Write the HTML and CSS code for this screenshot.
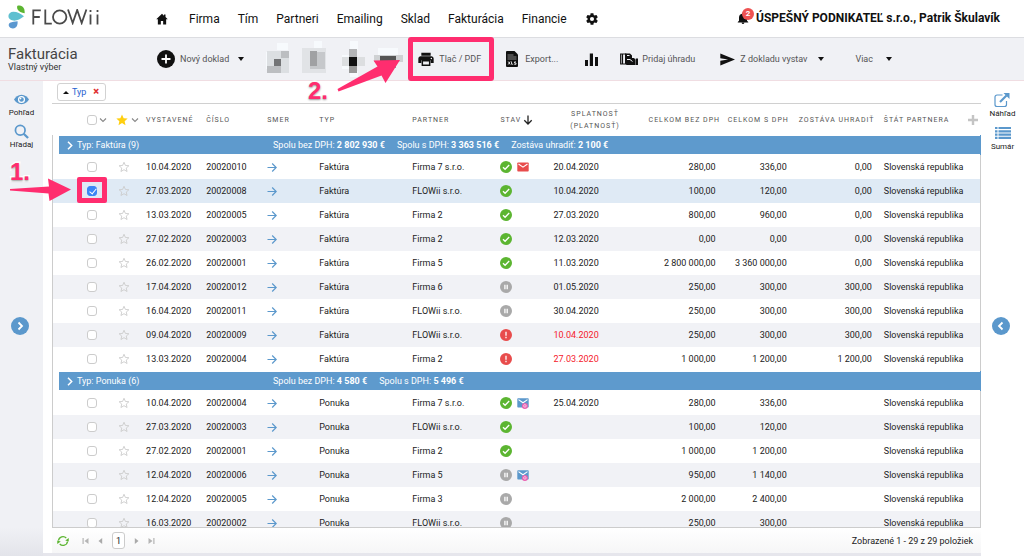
FILE: index.html
```html
<!DOCTYPE html>
<html lang="sk">
<head>
<meta charset="utf-8">
<title>FLOWii – Fakturácia</title>
<link rel="stylesheet" href="styles.css">
</head>
<body>
<svg class="sprite" aria-hidden="true">
  <symbol id="star" viewBox="0 0 24 24"><path d="M12 2.500l2.800 6.400 7 .6-5.300 4.600 1.600 6.900L12 17.400l-6.100 3.600 1.600-6.900L2.200 9.500l7-.6z" fill="none" stroke="#ccc" stroke-width="1.800"/></symbol>
  <symbol id="go" viewBox="0 0 10 10"><path d="M.5 5.500h8.500M5.200 1.500l4 4-4 4" fill="none" stroke="#5b98cc" stroke-width="1.200"/></symbol>
  <symbol id="ok" viewBox="0 0 12 12"><circle cx="6" cy="6" r="6" fill="#5cb531"/><path d="M3 6.200l2.100 2.100L9.200 4" fill="none" stroke="#fff" stroke-width="1.300"/></symbol>
  <symbol id="wait" viewBox="0 0 12 12"><circle cx="6" cy="6" r="6" fill="#a9a9a9"/><path d="M4.900 3.800v4.400M7.200 3.800v4.400" stroke="#fff" stroke-width="1.300"/></symbol>
  <symbol id="late" viewBox="0 0 12 12"><circle cx="6" cy="6" r="6" fill="#e84c4c"/><path d="M6 2.800v3.900M6 7.800v1.400" stroke="#fff" stroke-width="1.300"/></symbol>
  <symbol id="mail" viewBox="0 0 12 12"><rect x=".3" y="1.500" width="11.400" height="9" rx=".8" fill="#e84c4c"/><path d="M1.500 3L6 6.200 10.500 3" fill="none" stroke="#fff" stroke-width="1.100"/></symbol>
  <symbol id="read" viewBox="0 0 12 12"><rect x=".3" y="1.200" width="11.400" height="9.300" rx=".8" fill="#5b98cc"/><path d="M1.500 2.600L6 5.800l4.500-3.200" fill="none" stroke="#fff" stroke-width="1.100"/><circle cx="7.900" cy="8.900" r="3" fill="#ea5fb0"/><circle cx="7.900" cy="8.900" r="1.300" fill="none" stroke="#fff" stroke-width=".6"/></symbol>
  <symbol id="chev" viewBox="0 0 8 6"><path d="M1 1.500l3 3 3-3" fill="none" stroke="#888" stroke-width="1.100"/></symbol>
</svg>

<header class="topbar">
  <a class="logo" href="#" aria-label="FLOWii">
    <svg class="logo-mark" viewBox="0 0 18 24"><path d="M9.500 .8c2.500-1 6 .3 6.800 3.500.3 1.300.4 2.600.4 3.900-3-.3-6.200-1.600-7.200-4-.5-1.200-.6-2.700 0-3.400z" fill="#5cb531"/><path d="M16 11.300C12.500 14.300 8.500 16 5.200 15.600 2.300 15.300.3 13.400.4 11c.1-2.500 2.300-4.200 5-4.200 3.800 0 7.300 2.100 10.600 4.500z" fill="#5fc0d0"/><path d="M9.600 16.200c.2 2.600-.3 5-2 6.300-1.900 1.400-4.900 1.100-6.300-.7-1-1.300-.7-3.200.7-4 2-1.100 5-1 7.600-1.600z" fill="#5b98d0"/></svg>
    <svg class="logo-type" viewBox="0 0 68 16" fill="none" stroke="#4a4a4a" stroke-width="1.800"><path d="M1.300 15.500V1.300h7.500M1.300 8h6.500M13.300 .5v14.200h6.500"/><circle cx="27.700" cy="8" r="6.700"/><path d="M36 .5l4.700 13.500L45.200 1l4.500 13L54.400 .5M58.500 5.500v10M65.500 5.500v10M58.500 1v2M65.500 1v2"/></svg>
  </a>
  <nav class="mainnav">
    <a href="#" aria-label="Domov"><svg class="i12" viewBox="0 0 24 24"><path d="M12 1.500L.5 12.500h3.200V23h6v-7h4.600v7h6V12.500h3.200L19 8V3h-3v2.300z" fill="#111"/></svg></a>
    <a href="#">Firma</a><a href="#">Tím</a><a href="#">Partneri</a><a href="#">Emailing</a><a href="#">Sklad</a><a href="#">Fakturácia</a><a href="#">Financie</a>
    <a href="#" aria-label="Nastavenia"><svg class="i14" viewBox="0 0 24 24"><path fill="#111" d="M19.430 12.980c.04-.32.070-.64.070-.98s-.03-.66-.07-.98l2.110-1.650c.19-.15.240-.42.120-.64l-2-3.460c-.12-.22-.39-.3-.61-.22l-2.490 1c-.52-.4-1.080-.73-1.690-.98l-.38-2.650C14.460 2.180 14.250 2 14 2h-4c-.25 0-.46.180-.49.420l-.38 2.650c-.61.250-1.170.590-1.690.980l-2.490-1c-.23-.09-.49 0-.61.220l-2 3.460c-.13.220-.07.490.12.640l2.110 1.650c-.04.320-.07.650-.07.980s.03.660.070.980l-2.110 1.650c-.19.150-.24.420-.12.640l2 3.460c.12.220.390.300.610.220l2.490-1c.52.400 1.080.730 1.690.980l.38 2.650c.03.240.240.420.490.420h4c.25 0 .46-.18.490-.42l.38-2.650c.61-.25 1.170-.59 1.690-.98l2.490 1c.23.090.490 0 .61-.22l2-3.460c.12-.22.070-.49-.12-.64zM12 15.500a3.500 3.500 0 1 1 0-7 3.500 3.500 0 0 1 0 7z"/></svg></a>
  </nav>
  <div class="account">
    <button class="bell" aria-label="Upozornenia"><svg class="i12" viewBox="0 0 24 24"><path d="M12 24a2.700 2.700 0 0 0 2.700-2.500H9.300A2.700 2.700 0 0 0 12 24zm8-6.500V11c0-4-2-6.800-6-7.600V1.500h-4v1.900C6 4.200 4 7 4 11v6.500L1.500 20v1h21v-1z" fill="#111"/></svg><span class="badge">2</span></button>
    <strong>ÚSPEŠNÝ PODNIKATEĽ s.r.o., Patrik Škulavík</strong>
  </div>
</header>

<section class="toolbar">
  <div class="heading"><h1>Fakturácia</h1><p>Vlastný výber</p></div>
  <button class="tool"><svg class="i18" viewBox="0 0 18 18"><circle cx="9" cy="9" r="9" fill="#111"/><path d="M9 4.500v9M4.500 9h9" stroke="#fff" stroke-width="1.800"/></svg>Nový doklad<i class="caret"></i></button>
  <svg class="mosaic" viewBox="0 0 140 38" shape-rendering="crispEdges">
    <path fill="#f7fafd" d="M11 3h11v7H11zM48 1h8v7h-8zM84 1h8v9h-8zM0 12h7v17H0zM76 15h8v14h-8zM84 31h8v6h-8zM112 8h20v7h-20z"/>
    <path fill="#dcdfe2" d="M1 11h22v22H1z"/><path fill="#bcbec1" d="M15 11h8v7h-8zM1 26h14v7H1z"/><path fill="#737476" d="M8 19h7v7H8z"/>
    <path fill="#e1e3e6" d="M36 8h24v25H36z"/><path fill="#c6c8cb" d="M44 12h15v17H44z"/><path fill="#a0a1a3" d="M44 11h7v15h-7z"/>
    <path fill="#dcdee0" d="M76 17h23v9H76z"/><path fill="#b4b5b7" d="M83 9h8v8h-8z"/><path fill="#111" d="M83 17h8v9h-8z"/><path fill="#999" d="M83 26h8v7h-8z"/>
    <path fill="#cfd1d3" d="M108 15h29v7h-29z"/><path fill="#555" d="M114 16h16v6h-16z"/><path fill="#999" d="M122 22h8v6h-8z"/>
  </svg>
  <button class="tool print"><svg class="i16" viewBox="0 0 24 24"><path d="M5 2.500h14V7H5zM4 8h16c2 0 3.500 1.500 3.500 3.500V18H19v-4H5v4H.5v-6.500C.5 9.500 2 8 4 8z" fill="#111"/><path d="M6.500 14.500h11v7h-11z" fill="none" stroke="#111" stroke-width="2.200"/><circle cx="20" cy="11.300" r="1.100" fill="#fff"/></svg>Tlač / PDF</button>
  <button class="tool export"><svg class="xls" viewBox="0 0 12 16"><path d="M1 0h7.500L12 3.500V15a1 1 0 0 1-1 1H1a1 1 0 0 1-1-1V1a1 1 0 0 1 1-1z" fill="#111"/><path d="M1.500 4h6M1.500 6h9M1.500 8h9" stroke="#bbb" stroke-width=".7"/><path d="M2.200 10.500l2 3M4.200 10.500l-2 3M5.500 10.500v2.700h1.700M10 10.900H8.500v1.100H10v1.300H8.200" fill="none" stroke="#fff" stroke-width=".8"/></svg>Export...</button>
  <button class="tool chart" aria-label="Graf"><svg class="i13" viewBox="0 0 13 13"><path d="M0 7h3v6H0zM4.800 .5h3.200V13H4.800zM10 4h3v9h-3z" fill="#111"/></svg></button>
  <button class="tool pay"><svg class="hand" viewBox="0 0 18 13"><path d="M.7 1h5v10h-5zM2.500 1v10" fill="none" stroke="#111" stroke-width="1.200"/><path d="M5 .5h5l2 2V5h2l1.500 1.500V12H6.500L5 10z" fill="#111"/><path d="M7 2.500h2.500M7 6.500h3l2.500 2" stroke="#f0f1f5" stroke-width="1" fill="none"/><path d="M15.800 5.500H18V12h-2.200z" fill="#111"/></svg>Pridaj úhradu</button>
  <button class="tool issue"><svg class="i15" viewBox="0 0 24 24"><path d="M.5 2.500L24 12 .5 21.500V14l12.500-2L.5 10z" fill="#111"/></svg>Z dokladu vystav<i class="caret"></i></button>
  <button class="tool more">Viac<i class="caret"></i></button>
</section>

<div class="workspace">
  <aside class="side left">
    <button><svg class="i15" viewBox="0 0 24 24"><path d="M12 4.500C6.500 4.500 2.200 8 0 12c2.200 4 6.500 7.500 12 7.500S21.800 16 24 12c-2.200-4-6.500-7.500-12-7.500z" fill="#5b98cc"/><circle cx="12" cy="12" r="4.700" fill="#5b98cc" stroke="#fff" stroke-width="2"/><circle cx="10.500" cy="10.500" r="1.300" fill="#fff"/></svg>Pohľad</button>
    <button><svg class="i15" viewBox="0 0 24 24"><circle cx="10" cy="10" r="7.700" fill="none" stroke="#5b98cc" stroke-width="2.800"/><path d="M15.500 15.500l7 7" stroke="#5b98cc" stroke-width="3.600"/></svg>Hľadaj</button>
    <button class="slide" aria-label="Rozbaliť"><svg class="i18" viewBox="0 0 18 18"><circle cx="9" cy="9" r="9" fill="#5b98cc"/><path d="M7.500 5.500L11 9l-3.500 3.500" fill="none" stroke="#fff" stroke-width="1.800"/></svg></button>
  </aside>

  <main class="content">
    <div class="chips"><div class="chip"><i class="up"></i><a href="#">Typ</a><button aria-label="Odstrániť">×</button></div></div>
    <div class="scroller">
    <table>
      <colgroup><col class="w25"><col class="w32"><col class="w31"><col class="w60"><col class="w61"><col class="w52"><col class="w93"><col class="w88"><col class="w53"><col class="w95"><col class="w79"><col class="w71"><col class="w85"><col class="w103"></colgroup>
      <thead><tr>
        <th></th><th class="tick"><span class="pair"><input type="checkbox" aria-label="Vybrať všetko"><svg class="chev"><use href="#chev"/></svg></span></th>
        <th class="tick fav"><span class="pair"><svg class="i12" viewBox="0 0 24 24"><path d="M12 1l3.300 7.300 8 .8-6 5.300 1.700 7.900L12 18.200 5 22.300l1.700-7.900-6-5.300 8-.8z" fill="#ffcf10"/></svg><svg class="chev"><use href="#chev"/></svg></span></th>
        <th>Vystavené</th><th>Číslo</th><th>Smer</th><th>Typ</th><th>Partner</th>
        <th><span class="sort">Stav<svg class="i10" viewBox="0 0 10 10"><path d="M5 .5v8.500M1.300 5.300L5 9l3.700-3.700" fill="none" stroke="#222" stroke-width="1.300"/></svg></span></th>
        <th class="mid">Splatnosť (platnosť)</th><th>Celkom bez DPH</th><th>Celkom s DPH</th><th>Zostáva uhradiť</th>
        <th><span class="last">Štát partnera<svg class="i10" viewBox="0 0 10 10"><path d="M5 0v10M0 5h10" stroke="#c4c4c4" stroke-width="2.400"/></svg></span></th>
      </tr></thead>
      <tbody>
        <tr class="group"><td colspan="14"><div><svg class="open" viewBox="0 0 6 9"><path d="M1 .8l3.700 3.700L1 8.200" fill="none" stroke="#fff" stroke-width="1.500"/></svg><span class="gname">Typ: Faktúra (9)</span><span>Spolu bez DPH: <b>2 802 930 €</b></span><span>Spolu s DPH: <b>3 363 516 €</b></span><span>Zostáva uhradiť: <b>2 100 €</b></span></div></td></tr>
        <tr><td></td><td class="tick"><input type="checkbox" aria-label="20020010"></td><td class="tick fav"><svg class="i12"><use href="#star"/></svg></td><td>10.04.2020</td><td>20020010</td><td><svg class="i10"><use href="#go"/></svg></td><td>Faktúra</td><td>Firma 7 s.r.o.</td><td class="state"><svg class="i12"><use href="#ok"/></svg><svg class="i12"><use href="#mail"/></svg></td><td>20.04.2020</td><td class="num">280,00</td><td class="num">336,00</td><td class="num">0,00</td><td>Slovenská republika</td></tr>
        <tr class="selected"><td></td><td class="tick"><input type="checkbox" aria-label="20020008" checked></td><td class="tick fav"><svg class="i12"><use href="#star"/></svg></td><td>27.03.2020</td><td>20020008</td><td><svg class="i10"><use href="#go"/></svg></td><td>Faktúra</td><td>FLOWii s.r.o.</td><td class="state"><svg class="i12"><use href="#ok"/></svg></td><td>10.04.2020</td><td class="num">100,00</td><td class="num">120,00</td><td class="num">0,00</td><td>Slovenská republika</td></tr>
        <tr><td></td><td class="tick"><input type="checkbox" aria-label="20020005"></td><td class="tick fav"><svg class="i12"><use href="#star"/></svg></td><td>13.03.2020</td><td>20020005</td><td><svg class="i10"><use href="#go"/></svg></td><td>Faktúra</td><td>Firma 2</td><td class="state"><svg class="i12"><use href="#ok"/></svg></td><td>27.03.2020</td><td class="num">800,00</td><td class="num">960,00</td><td class="num">0,00</td><td>Slovenská republika</td></tr>
        <tr class="odd"><td></td><td class="tick"><input type="checkbox" aria-label="20020003"></td><td class="tick fav"><svg class="i12"><use href="#star"/></svg></td><td>27.02.2020</td><td>20020003</td><td><svg class="i10"><use href="#go"/></svg></td><td>Faktúra</td><td>Firma 2</td><td class="state"><svg class="i12"><use href="#ok"/></svg></td><td>12.03.2020</td><td class="num">0,00</td><td class="num">0,00</td><td class="num">0,00</td><td>Slovenská republika</td></tr>
        <tr><td></td><td class="tick"><input type="checkbox" aria-label="20020001"></td><td class="tick fav"><svg class="i12"><use href="#star"/></svg></td><td>26.02.2020</td><td>20020001</td><td><svg class="i10"><use href="#go"/></svg></td><td>Faktúra</td><td>Firma 5</td><td class="state"><svg class="i12"><use href="#ok"/></svg></td><td>11.03.2020</td><td class="num">2 800 000,00</td><td class="num">3 360 000,00</td><td class="num">0,00</td><td>Slovenská republika</td></tr>
        <tr class="odd"><td></td><td class="tick"><input type="checkbox" aria-label="20020012"></td><td class="tick fav"><svg class="i12"><use href="#star"/></svg></td><td>17.04.2020</td><td>20020012</td><td><svg class="i10"><use href="#go"/></svg></td><td>Faktúra</td><td>Firma 6</td><td class="state"><svg class="i12"><use href="#wait"/></svg></td><td>01.05.2020</td><td class="num">250,00</td><td class="num">300,00</td><td class="num">300,00</td><td>Slovenská republika</td></tr>
        <tr><td></td><td class="tick"><input type="checkbox" aria-label="20020011"></td><td class="tick fav"><svg class="i12"><use href="#star"/></svg></td><td>16.04.2020</td><td>20020011</td><td><svg class="i10"><use href="#go"/></svg></td><td>Faktúra</td><td>FLOWii s.r.o.</td><td class="state"><svg class="i12"><use href="#wait"/></svg></td><td>30.04.2020</td><td class="num">250,00</td><td class="num">300,00</td><td class="num">300,00</td><td>Slovenská republika</td></tr>
        <tr class="odd"><td></td><td class="tick"><input type="checkbox" aria-label="20020009"></td><td class="tick fav"><svg class="i12"><use href="#star"/></svg></td><td>09.04.2020</td><td>20020009</td><td><svg class="i10"><use href="#go"/></svg></td><td>Faktúra</td><td>FLOWii s.r.o.</td><td class="state"><svg class="i12"><use href="#late"/></svg></td><td class="overdue">10.04.2020</td><td class="num">250,00</td><td class="num">300,00</td><td class="num">300,00</td><td>Slovenská republika</td></tr>
        <tr><td></td><td class="tick"><input type="checkbox" aria-label="20020004"></td><td class="tick fav"><svg class="i12"><use href="#star"/></svg></td><td>13.03.2020</td><td>20020004</td><td><svg class="i10"><use href="#go"/></svg></td><td>Faktúra</td><td>Firma 2</td><td class="state"><svg class="i12"><use href="#late"/></svg></td><td class="overdue">27.03.2020</td><td class="num">1 000,00</td><td class="num">1 200,00</td><td class="num">1 200,00</td><td>Slovenská republika</td></tr>
        <tr class="group"><td colspan="14"><div><svg class="open" viewBox="0 0 6 9"><path d="M1 .8l3.700 3.700L1 8.200" fill="none" stroke="#fff" stroke-width="1.500"/></svg><span class="gname">Typ: Ponuka (6)</span><span>Spolu bez DPH: <b>4 580 €</b></span><span>Spolu s DPH: <b>5 496 €</b></span></div></td></tr>
        <tr><td></td><td class="tick"><input type="checkbox" aria-label="Ponuka 20020004"></td><td class="tick fav"><svg class="i12"><use href="#star"/></svg></td><td>10.04.2020</td><td>20020004</td><td><svg class="i10"><use href="#go"/></svg></td><td>Ponuka</td><td>Firma 7 s.r.o.</td><td class="state"><svg class="i12"><use href="#ok"/></svg><svg class="i12"><use href="#read"/></svg></td><td>25.04.2020</td><td class="num">280,00</td><td class="num">336,00</td><td></td><td>Slovenská republika</td></tr>
        <tr class="odd"><td></td><td class="tick"><input type="checkbox" aria-label="Ponuka 20020003"></td><td class="tick fav"><svg class="i12"><use href="#star"/></svg></td><td>27.03.2020</td><td>20020003</td><td><svg class="i10"><use href="#go"/></svg></td><td>Ponuka</td><td>FLOWii s.r.o.</td><td class="state"><svg class="i12"><use href="#ok"/></svg></td><td></td><td class="num">100,00</td><td class="num">120,00</td><td></td><td>Slovenská republika</td></tr>
        <tr><td></td><td class="tick"><input type="checkbox" aria-label="Ponuka 20020001"></td><td class="tick fav"><svg class="i12"><use href="#star"/></svg></td><td>27.02.2020</td><td>20020001</td><td><svg class="i10"><use href="#go"/></svg></td><td>Ponuka</td><td>Firma 2</td><td class="state"><svg class="i12"><use href="#ok"/></svg></td><td></td><td class="num">1 000,00</td><td class="num">1 200,00</td><td></td><td>Slovenská republika</td></tr>
        <tr class="odd"><td></td><td class="tick"><input type="checkbox" aria-label="Ponuka 20020006"></td><td class="tick fav"><svg class="i12"><use href="#star"/></svg></td><td>12.04.2020</td><td>20020006</td><td><svg class="i10"><use href="#go"/></svg></td><td>Ponuka</td><td>Firma 5</td><td class="state"><svg class="i12"><use href="#wait"/></svg><svg class="i12"><use href="#read"/></svg></td><td></td><td class="num">950,00</td><td class="num">1 140,00</td><td></td><td>Slovenská republika</td></tr>
        <tr><td></td><td class="tick"><input type="checkbox" aria-label="Ponuka 20020005"></td><td class="tick fav"><svg class="i12"><use href="#star"/></svg></td><td>12.04.2020</td><td>20020005</td><td><svg class="i10"><use href="#go"/></svg></td><td>Ponuka</td><td>Firma 3</td><td class="state"><svg class="i12"><use href="#wait"/></svg></td><td></td><td class="num">2 000,00</td><td class="num">2 400,00</td><td></td><td>Slovenská republika</td></tr>
        <tr class="odd"><td></td><td class="tick"><input type="checkbox" aria-label="Ponuka 20020002"></td><td class="tick fav"><svg class="i12"><use href="#star"/></svg></td><td>16.03.2020</td><td>20020002</td><td><svg class="i10"><use href="#go"/></svg></td><td>Ponuka</td><td>FLOWii s.r.o.</td><td class="state"><svg class="i12"><use href="#wait"/></svg></td><td></td><td class="num">250,00</td><td class="num">300,00</td><td></td><td>Slovenská republika</td></tr>
      </tbody>
    </table>
    </div>
    <footer class="pager">
      <button aria-label="Obnoviť"><svg class="i12" viewBox="0 0 24 24"><path d="M3 11a9 9 0 0 1 15.500-5M21 13a9 9 0 0 1-15.500 5" fill="none" stroke="#5cb531" stroke-width="2.600"/><path d="M23.500 6v7l-7-2zM.5 18v-7l7 2z" fill="#5cb531"/></svg></button>
      <span class="steps">
        <button aria-label="Prvá"><svg class="i7" viewBox="0 0 7 8"><path d="M.5 1h1.200v6H.5zM6.500 1v6L2.500 4z" fill="#b5b5b5"/></svg></button>
        <button aria-label="Predchádzajúca"><svg class="i7" viewBox="0 0 7 8"><path d="M5.200 1v6L1.500 4z" fill="#aaa"/></svg></button>
        <button class="page">1</button>
        <button aria-label="Ďalšia"><svg class="i7" viewBox="0 0 7 8"><path d="M1.800 1v6L5.500 4z" fill="#aaa"/></svg></button>
        <button aria-label="Posledná"><svg class="i7" viewBox="0 0 7 8"><path d="M5.300 1h1.200v6H5.300zM.5 1v6l4-3z" fill="#b5b5b5"/></svg></button>
      </span>
      <span class="count">Zobrazené 1 - 29 z 29 položiek</span>
    </footer>
  </main>

  <aside class="side right">
    <button><svg class="i16" viewBox="0 0 16 15"><path d="M8.500 2.500H3A2 2 0 0 0 1 4.500V12a2 2 0 0 0 2 2h7.500a2 2 0 0 0 2-2V8.500" fill="none" stroke="#5b98cc" stroke-width="1.200"/><path d="M6 9.500l6.500-6.500" stroke="#5b98cc" stroke-width="2.200"/><path d="M9.500.5H15.500v6z" fill="#5b98cc"/></svg>Náhľad</button>
    <button><svg class="i16" viewBox="0 0 16 14"><path d="M0 2h2.500M0 5.300h2.500M0 8.600h2.500M0 11.900h2.500M3.500 2H16M3.500 5.300H16M3.500 8.600H16M3.500 11.900H16" stroke="#5b98cc" stroke-width="2.200"/></svg>Sumár</button>
    <button class="slide" aria-label="Zbaliť"><svg class="i18" viewBox="0 0 18 18"><circle cx="9" cy="9" r="9" fill="#5b98cc"/><path d="M10.500 5.500L7 9l3.500 3.500" fill="none" stroke="#fff" stroke-width="1.800"/></svg></button>
  </aside>
</div>

<div class="note frame-print"></div>
<div class="note frame-check"></div>
<svg class="note arrow-one" viewBox="0 0 62 24"><path d="M0 11L39 8.500 38 .5 61 11.500 39.500 23l-1-7.500L0 12.500z" fill="#ff2d6f"/></svg>
<svg class="note arrow-two" viewBox="0 0 64 36"><path d="M.5 32L40.500 9.500 36.500 3.500 63 3 48.500 26l-4-7.500L1.500 34.500z" fill="#ff2d6f"/></svg>
<span class="note step one">1.</span>
<span class="note step two">2.</span>
</body>
</html>
```
FILE: styles.css
```css
* { box-sizing: border-box; }
body {
  margin: 0;
  height: 100vh;
  display: flex;
  flex-direction: column;
  overflow: hidden;
  position: relative;
  background: #fff;
  color: #222;
  font: 9px/12px Roboto, "Liberation Sans", sans-serif;
}
button { border: 0; padding: 0; background: none; font: inherit; color: inherit; }
a { color: inherit; text-decoration: none; }
svg { display: block; flex: none; }
.sprite { position: absolute; width: 0; height: 0; }
.i7 { width: 7px; height: 8px; }
.i10 { width: 10px; height: 10px; }
.i12 { width: 12px; height: 12px; }
.i13 { width: 13px; height: 13px; }
.i14 { width: 14px; height: 14px; }
.i15 { width: 15px; height: 15px; }
.i16 { width: 16px; height: 16px; }
.i18 { width: 18px; height: 18px; }

.topbar {
  display: flex;
  align-items: center;
  height: 38px;
  flex: none;
  padding: 0 24px 3px 8px;
  border-bottom: 1px solid #dcdde1;
}
.logo { display: flex; align-items: center; gap: 6px; width: 148px; }
.logo-mark { width: 18px; height: 24px; }
.logo-type { width: 68px; height: 16px; }
.mainnav { display: flex; align-items: center; gap: 18px; padding-top: 3px; font-size: 12px; line-height: 16px; color: #111; }
.mainnav a:first-child { margin-right: 3px; }
.account { display: flex; align-items: center; gap: 7px; margin-left: auto; padding-top: 2px; font-size: 12px; line-height: 16px; color: #111; }
.bell { position: relative; }
.badge {
  position: absolute;
  left: 5px;
  top: -4px;
  width: 12px;
  height: 12px;
  border-radius: 50%;
  background: #ee5252;
  color: #fff;
  font: bold 8px/12px Roboto, sans-serif;
}

.toolbar {
  display: flex;
  align-items: center;
  height: 43px;
  flex: none;
  padding-left: 8px;
  background: #f0f1f5;
  border-bottom: 1px solid #f0dde2;
  color: #555;
}
.heading { width: 149px; }
h1 { margin: 0; font-weight: 400; font-size: 15px; line-height: 16px; color: #444; }
.heading p { margin: 0; line-height: 10px; color: #333; }
.tool { display: flex; align-items: center; gap: 5px; white-space: nowrap; }
.caret { margin-left: 4px; border: 3px solid transparent; border-top: 4px solid #111; border-bottom: 0; }
.mosaic { width: 140px; height: 38px; margin: 0 12px 0 22px; }
.export { margin-left: 25px; gap: 7px; }
.xls { width: 12px; height: 16px; }
.chart { margin-left: 27px; }
.pay { margin-left: 22px; gap: 4px; }
.hand { width: 18px; height: 13px; }
.issue { margin-left: 25px; }
.issue .caret { margin-left: 6px; }
.more { margin-left: 31px; }
.more .caret { margin-left: 8px; }

.workspace { flex: 1; min-height: 0; display: flex; }
.side {
  display: flex;
  flex-direction: column;
  align-items: center;
  gap: 7px;
  width: 43px;
  flex: none;
  padding-top: 11px;
  font-size: 8px;
  line-height: 9px;
}
.side button { display: flex; flex-direction: column; align-items: center; gap: 1px; }
.left { background: linear-gradient(#f0f1f5 94%, #e3e4ea); }
.side .slide { margin: 159px 4px 0 0; }
.left .slide { margin-top: 161px; }
.content {
  flex: 1;
  min-width: 0;
  display: flex;
  flex-direction: column;
  padding-left: 9px;
  border-bottom: 3px solid #e6e6ec;
}
.chips { height: 23px; flex: none; padding: 2px 5px; border-bottom: 1px solid #d0d0d0; }
.chip {
  display: flex;
  align-items: center;
  gap: 3px;
  width: 49px;
  height: 18px;
  padding: 0 6px 0 5px;
  border: 1px solid #d2d2d2;
  border-radius: 3px;
  color: #1f62d0;
}
.chip button { margin-left: auto; color: #e03030; font-weight: 900; font-size: 11px; }
.up { border: 3px solid transparent; border-bottom: 3px solid #111; border-top: 0; }

.scroller { flex: 1; min-height: 0; overflow: hidden; border-bottom: 1px solid #ccc; }
table { width: 100%; table-layout: fixed; border-collapse: separate; border-spacing: 0; }
.w25 { width: 25px; } .w32 { width: 32px; } .w31 { width: 31px; } .w60 { width: 60px; } .w61 { width: 61px; }
.w52 { width: 52px; } .w93 { width: 93px; } .w88 { width: 88px; } .w53 { width: 53px; } .w95 { width: 95px; }
.w79 { width: 79px; } .w71 { width: 71px; } .w85 { width: 85px; } .w103 { width: 103px; }
th {
  height: 31px;
  padding: 0 0 0 6px;
  text-align: left;
  font-weight: 400;
  font-size: 7px;
  line-height: 12px;
  letter-spacing: 1px;
  text-transform: uppercase;
  white-space: nowrap;
  color: #555;
}
th.mid { text-align: center; padding: 0 20px; white-space: normal; }
td { height: 24px; padding: 0 6px; white-space: nowrap; }
tbody td:first-child { border-left: 1px solid #ccc; }
tbody td:last-child { border-right: 1px solid #ccc; }
.num { text-align: right; }
.tick { padding: 0 0 0 10px; }
.fav { padding-left: 9px; }
th.fav { padding-left: 7px; }
.pair, .sort, .last { display: flex; align-items: center; gap: 2px; }
.last { justify-content: space-between; padding-right: 3px; }
.chev { width: 8px; height: 6px; }
.fav .pair { gap: 3px; }
.odd { background: #f1f2f6; }
.selected { background: #dfeaf5; }
.overdue { color: #f5202b; }
.state svg { display: inline-block; vertical-align: middle; margin-right: 5px; }
.group td { height: 20px; padding: 1px 0 1px 6px; }
.group td:last-child { border-right-color: #5b98cc; }
.group div {
  display: flex;
  align-items: center;
  gap: 12px;
  height: 18px;
  padding-left: 8px;
  background: #5e9acd;
  color: #fff;
}
.open { width: 6px; height: 9px; }
.gname { width: 184px; margin-left: -8px; }

input[type="checkbox"] {
  appearance: none;
  display: block;
  flex: none;
  width: 10px;
  height: 10px;
  margin: 0;
  border: 1px solid #ccc;
  border-radius: 3px;
  background: #fff;
}
input[type="checkbox"]:checked { background: #3a86f5; border-color: #3a86f5; }
input[type="checkbox"]:checked::after {
  content: "";
  display: block;
  width: 3px;
  height: 6px;
  margin: 0 0 0 3px;
  border: solid #fff;
  border-width: 0 1px 1px 0;
  transform: rotate(40deg);
}

.pager {
  display: flex;
  align-items: center;
  flex: none;
  height: 25px;
  padding: 0 8px 0 5px;
  background: linear-gradient(#fff, #f6f6f7);
}
.steps { display: flex; align-items: center; gap: 8px; margin-left: 13px; }
.page { width: 13px; height: 17px; border: 1px solid #ccc; border-radius: 3px; background: #fff; }
.count { margin-left: auto; }

/* Tutorial call-outs laid over the application */
.note { position: absolute; pointer-events: none; }
.frame-print { left: 408px; top: 37px; width: 86px; height: 44px; border: 5px solid #ff2d6f; border-radius: 3px; }
.frame-check { left: 77px; top: 177px; width: 30px; height: 26px; border: 5px solid #ff2d6f; border-radius: 2px; }
.arrow-one { left: 10px; top: 178px; width: 62px; height: 24px; }
.arrow-two { left: 337px; top: 57px; width: 64px; height: 36px; }
.step {
  font: bold 24px/24px "Liberation Sans", Arial, sans-serif;
  color: #ff2d6f;
  -webkit-text-stroke: 3px #fff;
  paint-order: stroke fill;
  text-shadow: 0 1px 2px #999;
}
.one { left: 10px; top: 160px; }
.two { left: 308px; top: 79px; }
```
